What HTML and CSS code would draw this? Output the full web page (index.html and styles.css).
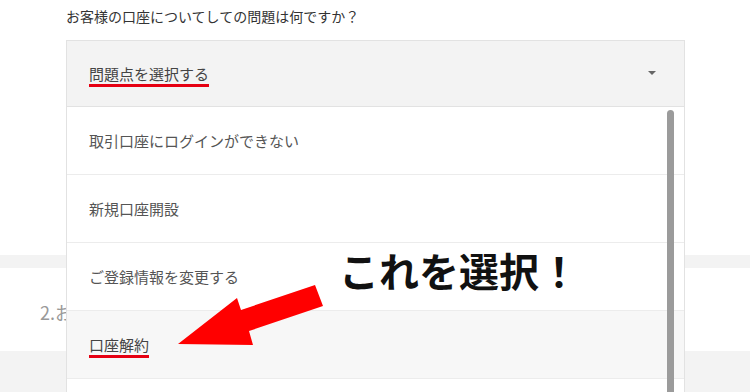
FILE: index.html
```html
<!DOCTYPE html>
<html lang="ja">
<head>
<meta charset="utf-8">
<title>お問い合わせ</title>
<link rel="stylesheet" href="styles.css">
</head>
<body>
<div class="page">
  <section class="q1">
    <p class="question">お客様の口座についてしての問題は何ですか？</p>
    <div class="select">
      <div class="select-head">
        <span class="mark">問題点を選択する</span>
        <span class="caret"></span>
      </div>
      <ul class="options">
        <li>取引口座にログインができない</li>
        <li>新規口座開設</li>
        <li>ご登録情報を変更する</li>
        <li class="hover"><span class="mark">口座解約</span></li>
        <li></li>
      </ul>
    </div>
  </section>
  <div class="gap"></div>
  <section class="q2">
    <h2 class="q2-title">2.お問い合わせ内容</h2>
  </section>
  <div class="rest"></div>

  <div class="callout">これを選択！</div>
  <svg class="arrow" viewBox="0 0 152 66" width="152" height="66" aria-hidden="true">
    <polygon points="3,62 62,16 66,28 140,3 148,24 74,49 78,63" fill="#ff0000"/>
  </svg>
</div>
</body>
</html>
```

FILE: styles.css
```css
html, body {
  margin: 0;
  padding: 0;
  overflow: hidden;
  background: #ffffff;
}

body {
  font-family: "Noto Sans CJK JP", "Noto Sans", sans-serif;
  color: #333;
}

.page {
  position: relative;
  width: 750px;
  height: 392px;
  overflow: hidden;
  background: #f3f3f3;
}

.q1 {
  height: 255px;
  background: #fff;
  padding: 6px 0 0 66px;
  box-sizing: border-box;
}

.question {
  margin: 0 0 14px;
  font-size: 14px;
  line-height: 20px;
  color: #333;
}

.select {
  position: relative;
  width: 619px;
  z-index: 2;
}

.select-head {
  height: 67px;
  box-sizing: border-box;
  border: 1px solid #e2e2e2;
  background: #f3f3f3;
  display: flex;
  align-items: center;
  justify-content: space-between;
  padding: 0 28px 0 22px;
}

.mark {
  display: inline-block;
  font-size: 15px;
  line-height: 20px;
  color: #444;
  border-bottom: 3px solid #e60012;
  margin-top: 3px;
}

.caret {
  width: 0;
  height: 0;
  border-left: 4px solid transparent;
  border-right: 4px solid transparent;
  border-top: 4px solid #666;
  margin-top: -1px;
}

.options {
  position: absolute;
  top: 100%;
  left: 0;
  width: 100%;
  margin: 0;
  padding: 0;
  list-style: none;
  background: #fff;
  box-sizing: border-box;
  border-left: 1px solid #e2e2e2;
  border-right: 1px solid #e2e2e2;
}

.options::after {
  content: "";
  position: absolute;
  top: 3px;
  right: 10px;
  bottom: 0;
  width: 7px;
  border-radius: 4px 4px 0 0;
  background: #9b9b9b;
}

.options li {
  height: 68px;
  box-sizing: border-box;
  border-bottom: 1px solid #ececec;
  display: flex;
  align-items: center;
  padding-left: 22px;
  font-size: 15px;
  color: #555;
}

.options li.hover {
  background: #f7f7f7;
}

.options li.hover .mark {
  color: #444;
}

.gap {
  height: 13px;
  background: #f3f3f3;
}

.q2 {
  height: 83px;
  background: #fff;
  padding: 32px 0 0 40px;
  box-sizing: border-box;
}

.q2-title {
  margin: 0;
  font-size: 18px;
  line-height: 24px;
  font-weight: normal;
  color: #999;
}

.rest {
  height: 41px;
  background: #f3f3f3;
}

.callout {
  position: absolute;
  left: 339px;
  top: 250px;
  z-index: 4;
  font-size: 40px;
  line-height: 40px;
  font-weight: bold;
  color: #111;
  white-space: nowrap;
}

.arrow {
  position: absolute;
  left: 175px;
  top: 282px;
  z-index: 5;
}
```
